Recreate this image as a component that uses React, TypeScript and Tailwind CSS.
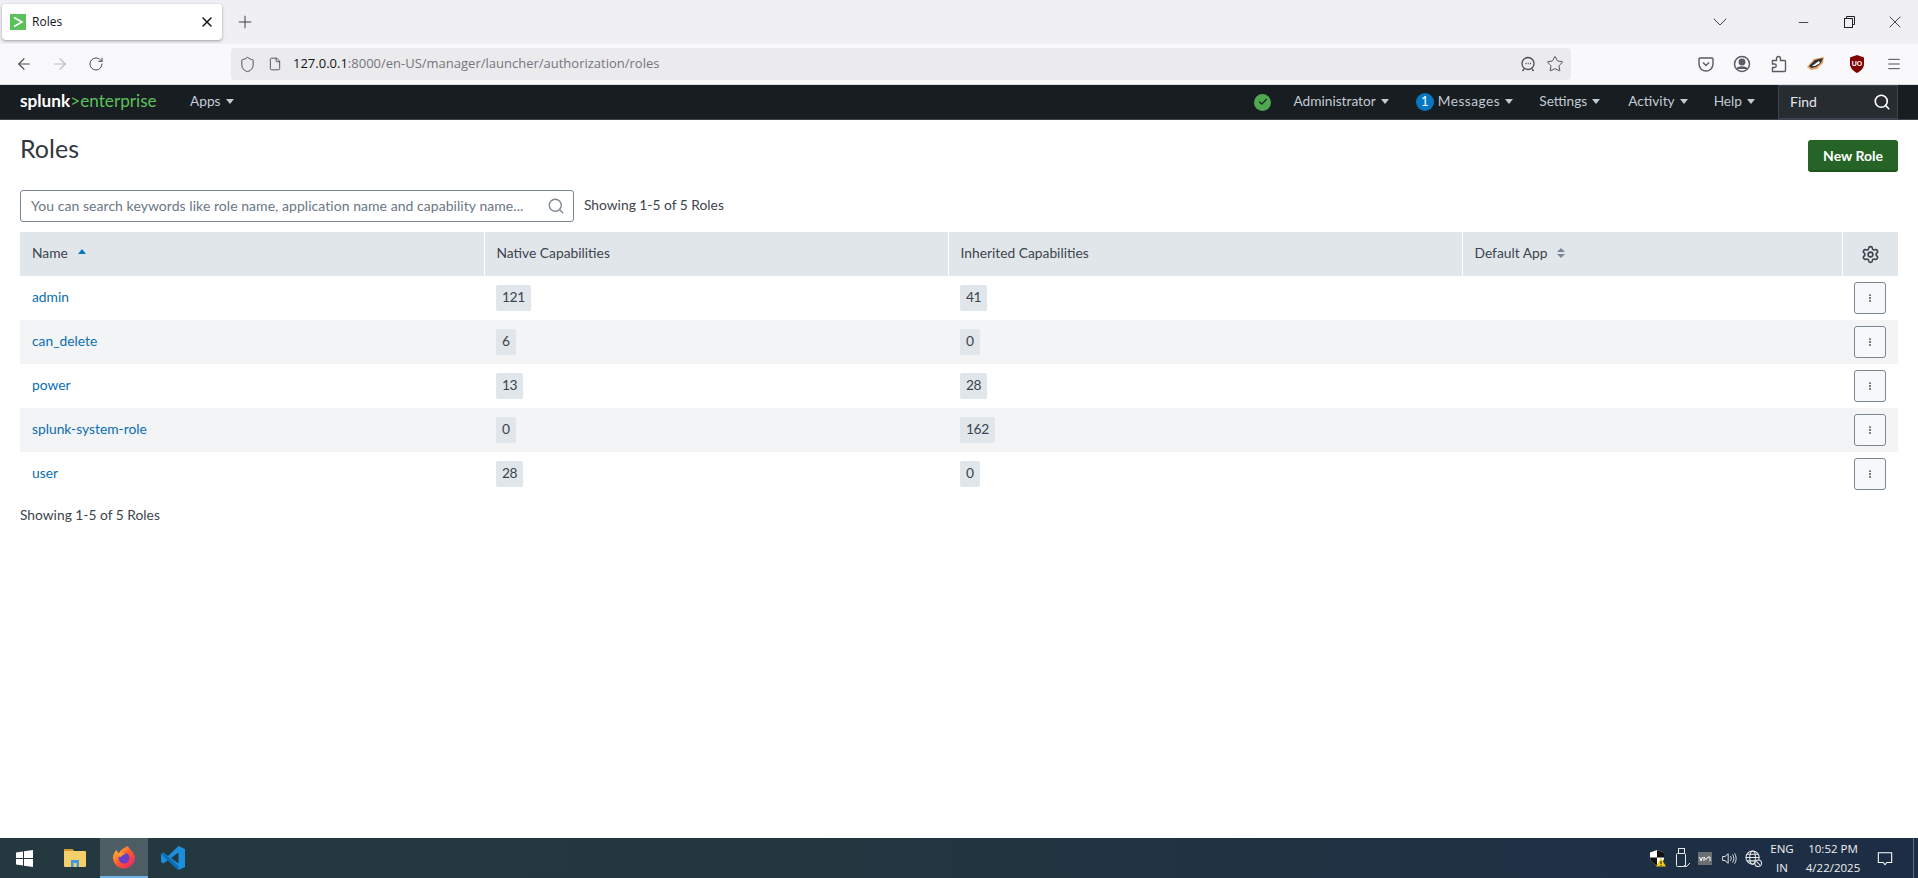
import React from "react";
import { ArrowLeft, ArrowRight, RotateCw, Shield, File, Star, X, Plus, ChevronDown, Minus, Search, Settings, EllipsisVertical, Menu, Check } from "lucide-react";

const ui = "font-['Open_Sans','Noto_Sans',sans-serif]";
const sp = "font-['Lato','Open_Sans',sans-serif]";

function Caret({ className = "border-t-[#c3cbd4]" }: { className?: string }) {
  return <span className={`inline-block w-0 h-0 border-l-[4px] border-r-[4px] border-t-[5px] border-l-transparent border-r-transparent ${className}`} />;
}

function NavItem({ label, width }: { label: string; width: string }) {
  return (
    <div className={`flex items-center gap-[5px] text-[13.7px] text-[#c3cbd4] ${width}`}>
      <span className="-mt-[2px]">{label}</span>
      <Caret />
    </div>
  );
}

function Tray() {
  return (
    <div className="flex items-center h-full text-white">
      <svg width="17" height="18" viewBox="0 0 17 18">
        <path d="M8 1l7 2.500V9c0 3.500-3 5.500-7 7-4-1.500-7-3.500-7-7V3.500z" fill="#fff" />
        <path d="M8 1l7 2.500V8.500H8zM1 8.500h7V16c-4-1.500-7-3.500-7-7.500z" fill="#111" />
        <path d="M12 9l5 8.500H7z" fill="#f5c518" />
        <path d="M12 12v3M12 16v1" stroke="#222" strokeWidth="1" />
      </svg>
      <svg width="14" height="22" viewBox="0 0 14 22" className="ml-[10px]" fill="none" stroke="#e8e8e8">
        <rect x="2.500" y="1.500" width="6" height="5" />
        <rect x="0.500" y="6.500" width="9" height="13" rx="1" />
        <path d="M8 18l2 2 4-4" />
      </svg>
      <svg width="14" height="13" viewBox="0 0 14 13" className="ml-[8px]">
        <rect width="14" height="13" fill="#6b6f72" />
        <path d="M1.500 5l1.500 4 1.500-4M6 9V5l2 2.500L10 5l2 0v4" stroke="#fff" strokeWidth="1" fill="none" />
      </svg>
      <svg width="16" height="15" viewBox="0 0 20 18" className="ml-[9px]" fill="none" stroke="#e8e8e8" strokeWidth="1.200">
        <path d="M2 6.500h3L9 3v12l-4-3.500H2z" />
        <path d="M12 6c1 2 1 4 0 6M14.500 4c2 3 2 7 0 10M17 2.500c2.500 4 2.500 9 0 13" />
      </svg>
      <svg width="17" height="17" viewBox="0 0 18 18" className="ml-[8px]" fill="none" stroke="#e8e8e8" strokeWidth="1.100">
        <circle cx="8" cy="8" r="7" />
        <ellipse cx="8" cy="8" rx="3" ry="7" />
        <path d="M1 8h14M2 4.500h12M2 11.500h12" />
        <circle cx="14" cy="14" r="3.500" fill="#1b2c44" />
        <path d="M12 12l4 4" />
      </svg>
      <div className={`${ui} ml-[5px] w-[30px] flex flex-col items-center text-[11.500px] leading-[19px] text-[#f0f0f0]`}>
        <span>ENG</span>
        <span>IN</span>
      </div>
      <div className={`${ui} ml-[8px] w-[56px] flex flex-col items-center text-[11.500px] leading-[19px] text-[#f0f0f0]`}>
        <span>10:52 PM</span>
        <span>4/22/2025</span>
      </div>
      <svg width="16" height="15" viewBox="0 0 18 16" className="ml-[16px]" fill="none" stroke="#fff" strokeWidth="1.200">
        <path d="M1.500 1.500h15v11h-5.500L9 15l-2-2.500H1.500z" />
      </svg>
      <div className="ml-[20px] w-[1px] h-full bg-[#5c6b7d]" />
      <div className="w-[4px]" />
    </div>
  );
}

const rows = [
  { name: "admin", native: "121", inherited: "41", alt: false },
  { name: "can_delete", native: "6", inherited: "0", alt: true },
  { name: "power", native: "13", inherited: "28", alt: false },
  { name: "splunk-system-role", native: "0", inherited: "162", alt: true },
  { name: "user", native: "28", inherited: "0", alt: false },
];

export default function App() {
  return (
    <div className={`w-[1918px] h-[878px] flex flex-col bg-white overflow-hidden ${sp}`}>
      {/* tab strip */}
      <div className="h-[44px] bg-[#f0f0f4] flex items-start shrink-0">
        <div className={`${ui} mt-[4px] ml-[2px] w-[220px] h-[36px] bg-white rounded-[4px] shadow-[0_1px_3px_rgba(0,0,0,0.35)] flex items-center pl-[8px] pr-[7px] text-[12px] text-[#15141a]`}>
          <div className="w-[16px] h-[16px] bg-[#5cc05c] flex items-center justify-center">
            <svg width="12" height="12" viewBox="0 0 12 12" fill="none" stroke="#fff" strokeWidth="1.600"><path d="M2 1.500L10 6l-8 4.500" /></svg>
          </div>
          <span className="ml-[6px]">Roles</span>
          <X size={16} strokeWidth={2.200} className="ml-auto" />
        </div>
        <Plus size={20} strokeWidth={1.200} className="mt-[12px] ml-[13px] text-[#3f3e45]" />
        <div className="ml-auto flex items-center h-[44px] text-[#222]">
          <ChevronDown size={24} strokeWidth={1} className="text-[#3f3e45]" />
          <Minus size={15} strokeWidth={1.300} className="ml-[64px]" />
          <svg width="11" height="12" viewBox="0 0 11 12" fill="none" stroke="#222" className="ml-[33px]"><rect x="0.500" y="2.500" width="8" height="9" /><path d="M2.500 2.500v-2h8v8h-2" /></svg>
          <X size={20} strokeWidth={1} className="ml-[30px] mr-[13px]" />
        </div>
      </div>
      {/* toolbar */}
      <div className="h-[41px] bg-[#f9f9fb] border-b border-[#dcdce0] flex items-center shrink-0 text-[#4d4d57]">
        <ArrowLeft size={18} strokeWidth={1.500} className="ml-[15px]" />
        <ArrowRight size={18} strokeWidth={1.500} className="ml-[18px] text-[#bcbcc2]" />
        <RotateCw size={16} strokeWidth={1.500} className="ml-[19px]" />
        <div className={`${ui} ml-[127px] w-[1340px] h-[32px] bg-[#ebebed] rounded-[4px] flex items-center text-[13px] pl-[8px]`}>
          <Shield size={17} strokeWidth={1.400} />
          <File size={14} strokeWidth={1.600} className="ml-[12px]" />
          <span className="ml-[11px] text-[#15141a]">127.0.0.1</span>
          <span className="text-[#75757d]">:8000/en-US/manager/launcher/authorization/roles</span>
          <svg width="16" height="16" viewBox="0 0 16 16" fill="none" stroke="#4d4d57" strokeWidth="1.300" className="ml-auto"><circle cx="8" cy="7.500" r="6" /><path d="M4 13l-1.500 2M12 13l1.500 2" /><path d="M5.500 7.500h1M7.700 7.500h1M10 7.500h1" /></svg>
          <Star size={18} strokeWidth={1.300} className="ml-[10px] mr-[7px]" />
        </div>
        <svg width="16" height="16" viewBox="0 0 16 16" fill="none" stroke="#5b5b66" strokeWidth="1.400" className="ml-[127px]"><path d="M2 2h12a1 1 0 011 1v5a7 7 0 01-14 0V3a1 1 0 011-1z" /><path d="M5 6.500l3 3 3-3" /></svg>
        <svg width="18" height="18" viewBox="0 0 18 18" className="ml-[19px]" fill="none" stroke="#5b5b66" strokeWidth="1.500"><circle cx="9" cy="9" r="7.500" /><circle cx="9" cy="7" r="2.700" fill="#5b5b66" /><path d="M3.800 14c1-2.800 9.400-2.800 10.400 0" fill="#5b5b66" /></svg>
        <svg width="16" height="18" viewBox="0 0 16 18" className="ml-[20px]" fill="none" stroke="#5b5b66" strokeWidth="1.400"><path d="M1.500 16.500v-4h2a1.500 1.500 0 000-3.500h-2V5.500h4V3.500a2 2 0 014 0v2h4a1 1 0 011 1v9a1 1 0 01-1 1z" /></svg>
        <svg width="18" height="14" viewBox="0 0 18 14" className="ml-[20px]"><path d="M0 10l7-8 10-2-1 6-6 6-6 1z" fill="#e8a368" /><path d="M2 9l6-6 8-2-2 5-5 4-5 1z" fill="#333" /><path d="M5 9l7-5 1 2-5 3z" fill="#fff" /></svg>
        <svg width="16" height="18" viewBox="0 0 16 18" className="ml-[24px]"><path d="M8 0l7 2.500V9c0 4-3 7-7 9-4-2-7-5-7-9V2.500z" fill="#800000" /><text x="8" y="11" textAnchor="middle" fontSize="7" fontFamily="Liberation Sans, sans-serif" fontWeight="700" fill="#fff">UO</text></svg>
        <Menu size={16} strokeWidth={1.500} className="ml-[21px]" />
      </div>
      {/* splunk bar */}
      <div className="h-[35px] bg-[#171d21] border-b border-[#3c444d] flex items-center shrink-0">
        <div className={`ml-[20px] w-[156px] text-[17.200px] leading-none -mt-[2px] ${sp}`}>
          <span className="font-bold text-white">splunk</span><span className="text-[#5cc05c]">&gt;enterprise</span>
        </div>
        <div className="ml-[14px]"><NavItem label="Apps" width="" /></div>
        <div className="ml-auto flex items-center">
          <div className="w-[17px] h-[17px] rounded-full bg-[#4fa84f] flex items-center justify-center mr-[22px]">
            <Check size={10} strokeWidth={3} className="text-[#171d21]" />
          </div>
          <NavItem label="Administrator" width="mr-[27px]" />
          <div className="w-[18px] h-[18px] rounded-full bg-[#0877c2] text-white text-[13px] flex items-center justify-center mr-[4px]">1</div>
          <NavItem label="Messages" width="mr-[26px] tracking-[0.5px]" />
          <NavItem label="Settings" width="mr-[28px]" />
          <NavItem label="Activity" width="mr-[26px]" />
          <NavItem label="Help" width="mr-[23px]" />
          <div className="w-[120px] h-[34px] -mt-[1px] bg-[#272c30] border border-[#3c444d] flex items-center justify-between pl-[11px] pr-[6px] text-[14px] text-[#e1e6eb]">
            <span>Find</span>
            <Search size={18} strokeWidth={2.200} className="text-white" />
          </div>
          <div className="w-[20px]" />
        </div>
      </div>
      {/* content */}
      <main className="flex-1 px-[20px] text-[#3c444d] min-h-0">
        <div className="flex items-start justify-between h-[70px]">
          <h1 className="text-[25px] leading-[30px] mt-[13px] font-normal text-[#31373e]">Roles</h1>
          <button className="mt-[20px] w-[90px] h-[32px] rounded-[3px] bg-[#266327] border-b-2 border-[#1f5420] text-white text-[14px] font-bold">New Role</button>
        </div>
        <div className="flex items-center h-[32px] mb-[10px]">
          <div className="w-[554px] h-[32px] border border-[#7c8794] rounded-[3px] flex items-center pl-[10px] pr-[8px] pb-[2px] text-[14px] tracking-[0.05px] text-[#6b7785]">
            <span>You can search keywords like role name, application name and capability name...</span>
            <Search size={18} strokeWidth={1.800} className="ml-auto mt-[2px] text-[#7c8794]" />
          </div>
          <span className="ml-[10px] pb-[2px] text-[13.800px]">Showing 1-5 of 5 Roles</span>
        </div>
        <table className="w-full table-fixed border-collapse text-[13.800px]">
          <colgroup>
            <col className="w-[464px]" />
            <col className="w-[464px]" />
            <col className="w-[514px]" />
            <col className="w-[380px]" />
            <col />
          </colgroup>
          <thead>
            <tr className="h-[44px] bg-[#e1e6eb]">
              <th className="font-normal text-left pl-[12px] pb-[2px] border-r border-white">
                Name<span className="inline-block ml-[10px] mb-[4px] w-0 h-0 border-l-[4px] border-r-[4px] border-b-[5px] border-l-transparent border-r-transparent border-b-[#0877c2]" />
              </th>
              <th className="font-normal text-left pl-[12px] pb-[2px] border-r border-white">Native Capabilities</th>
              <th className="font-normal text-left pl-[12px] pb-[2px] border-r border-white">Inherited Capabilities</th>
              <th className="font-normal text-left pl-[12px] pb-[2px] border-r border-white">
                <span className="inline-flex items-center">Default App
                  <span className="ml-[9px] flex flex-col gap-[2px]">
                    <span className="w-0 h-0 border-l-[4px] border-r-[4px] border-b-[4px] border-l-transparent border-r-transparent border-b-[#7c8794]" />
                    <span className="w-0 h-0 border-l-[4px] border-r-[4px] border-t-[4px] border-l-transparent border-r-transparent border-t-[#7c8794]" />
                  </span>
                </span>
              </th>
              <th className="font-normal"><Settings size={19} strokeWidth={2} className="mx-auto text-[#3c444d]" /></th>
            </tr>
          </thead>
          <tbody>
            {rows.map((r) => (
              <tr key={r.name} className={`h-[44px] ${r.alt ? "bg-[#f2f4f5]" : "bg-white"}`}>
                <td className="pl-[12px] pb-[2px] text-[#0a6eb0]">{r.name}</td>
                <td className="pl-[12px]"><span className="inline-block bg-[#e1e6eb] rounded-[2px] px-[6px] h-[26px] leading-[24px] tracking-[-0.4px]">{r.native}</span></td>
                <td className="pl-[12px]"><span className="inline-block bg-[#e1e6eb] rounded-[2px] px-[6px] h-[26px] leading-[24px] tracking-[-0.4px]">{r.inherited}</span></td>
                <td />
                <td>
                  <div className="ml-[12px] w-[32px] h-[32px] border border-[#7c8794] rounded-[3px] bg-[#f7f8fa] flex items-center justify-center">
                    <EllipsisVertical size={10} strokeWidth={2.500} className="text-[#3c444d]" />
                  </div>
                </td>
              </tr>
            ))}
          </tbody>
        </table>
        <div className="mt-[9px] text-[13.800px]">Showing 1-5 of 5 Roles</div>
      </main>
      {/* taskbar */}
      <div className="h-[40px] shrink-0 flex items-center justify-between bg-[linear-gradient(90deg,#243840_0%,#233740_40%,#1c2d45_100%)]">
        <div className="flex items-center h-full">
          <svg width="17" height="17" viewBox="0 0 17 17" className="ml-[16px]" fill="#fff"><path d="M0 2.500l7-1v6.500H0zM8 1.300L17 0v8H8zM0 9h7v6.500l-7-1zM8 9h9v8l-9-1.300z" /></svg>
          <svg width="22" height="18" viewBox="0 0 22 18" className="ml-[31px]"><path d="M0 1a1 1 0 011-1h7l2 2h11a1 1 0 011 1v14a1 1 0 01-1 1H1a1 1 0 01-1-1z" fill="#f4cf6a" /><path d="M0 1a1 1 0 011-1h7l2 2H0z" fill="#d49a26" /><path d="M7 18v-7h8v7h-2.500v-4h-3v4z" fill="#3c9ae0" /></svg>
          <div className="ml-[14px] w-[48px] h-full bg-[#4c5d64] border-b-[2px] border-[#6eb1e8] flex items-center justify-center">
            <svg width="24" height="24" viewBox="0 0 24 24">
              <defs>
                <linearGradient id="fx" x1="0" y1="0" x2="1" y2="1"><stop offset="0" stopColor="#ffd33a" /><stop offset="0.500" stopColor="#ff5a2c" /><stop offset="1" stopColor="#e3197b" /></linearGradient>
              </defs>
              <path d="M16 1c1 3 6 6 7 11a11 11 0 01-22 1C1 9 3 6 5 5c0 2 1 3 2 3 1-3 5-5 9-7z" fill="url(#fx)" />
              <circle cx="12" cy="13" r="5.500" fill="#6b3fc4" />
              <path d="M4 10c3-3 7-3 10-1-2 0-4 1-5 3-2 0-4-1-5-2z" fill="#ff9a2c" />
            </svg>
          </div>
          <svg width="24" height="24" viewBox="0 0 24 24" className="ml-[13px]">
            <path d="M17.500 0L24 3v18l-6.500 3L7 14l-4.500 3.500L0 16V8l2.500-1.500L7 10z" fill="#1b8fdc" />
            <path d="M17.500 6.500v11L10 12z" fill="#243840" />
            <path d="M0 8l2.500-1.500L17.500 20v4l-4-3z" fill="#0b6fb8" />
          </svg>
        </div>
        <Tray />
      </div>
    </div>
  );
}
